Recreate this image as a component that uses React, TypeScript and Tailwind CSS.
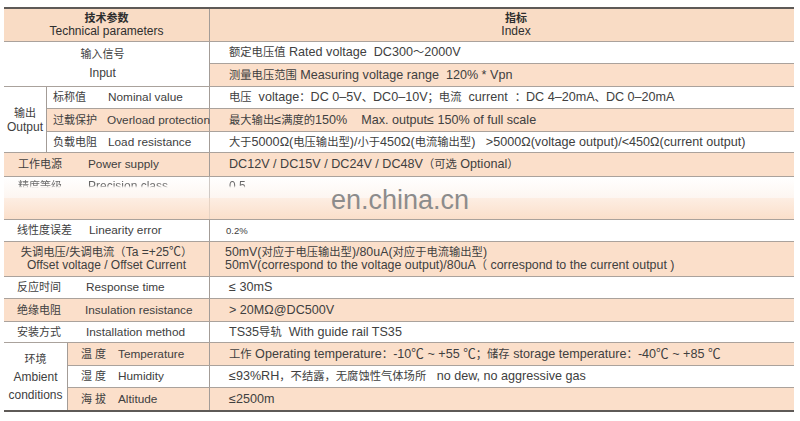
import React from "react";

const PEACH = "bg-[#fbdfca]";

function T({ s }: { s: string }) {
  const parts = s.match(/[\u3000-\u9fff\uff00-\uffef]+|[^\u3000-\u9fff\uff00-\uffef]+/g) || [];
  return (
    <>
      {parts.map((p, i) =>
        /[\u3000-\u9fff\uff00-\uffef]/.test(p) ? (
          <span key={i} className="text-[11.3px]">{p}</span>
        ) : (
          <span key={i}>{p}</span>
        )
      )}
    </>
  );
}

function Cell({ s, className = "" }: { s: string; className?: string }) {
  return (
    <div className={"flex items-center whitespace-pre text-[12.6px] " + className}>
      <span><T s={s} /></span>
    </div>
  );
}

function Label({ zh, en, pl, w }: { zh: string; en: string; pl: string; w: string }) {
  return (
    <div className={"flex items-baseline whitespace-pre " + pl}>
      <span className={"text-[11px] " + w}>{zh}</span>
      <span className="text-[11.8px]">{en}</span>
    </div>
  );
}

export default function App() {
  return (
    <div className="relative w-[800px] h-[421px] bg-white pt-[7px] pl-[4px] text-[12px] leading-[13px] text-[#404040] font-['Liberation_Sans','Noto_Sans_CJK_SC',sans-serif]">
      <div className="w-[790px] border-t-2 border-b-2 border-[#5e5a57]">
        {/* header */}
        <div className="flex h-[33px] bg-[#f9dcc5] border-b border-[#aaa29c]">
          <div className="w-[206px] border-r border-[#a39c97] flex flex-col items-center justify-center text-[#2e2e2e]">
            <span className="font-bold text-[11px]">技术参数</span>
            <span className="text-[12px]">Technical parameters</span>
          </div>
          <div className="flex-1 flex flex-col items-center justify-center pl-[28px] text-[#2e2e2e]">
            <span className="font-bold text-[11px]">指标</span>
            <span className="text-[12px]">Index</span>
          </div>
        </div>

        {/* input */}
        <div className="flex border-b border-[#aaa29c]">
          <div className="w-[206px] border-r border-[#a39c97] flex flex-col items-center justify-center leading-[19px] pr-[8px]">
            <span className="text-[11px]">输入信号</span>
            <span>Input</span>
          </div>
          <div className="flex-1 flex flex-col">
            <Cell className="h-[22px] border-b border-[#aaa29c] pl-[19px]" s="额定电压值 Rated voltage  DC300～2000V" />
            <Cell className={"h-[22px] pl-[19px] " + PEACH} s="测量电压范围 Measuring voltage range  120% * Vpn" />
          </div>
        </div>

        {/* output */}
        <div className="flex border-b border-[#aaa29c]">
          <div className="w-[43px] border-r border-[#a39c97] flex flex-col items-center justify-center leading-[14px]">
            <span className="text-[11px]">输出</span>
            <span>Output</span>
          </div>
          <div className="flex-1 flex flex-col">
            <div className="flex h-[22px] border-b border-[#aaa29c]">
              <div className="w-[163px] border-r border-[#a39c97] flex items-center">
                <Label zh="标称值" en="Nominal value" pl="pl-[6px]" w="w-[55px]" />
              </div>
              <Cell className="flex-1 pl-[19px]" s="电压  voltage：DC 0–5V、DC0–10V；电流  current  ：DC 4–20mA、DC 0–20mA" />
            </div>
            <div className={"flex h-[23px] border-b border-[#aaa29c] " + PEACH}>
              <div className="w-[163px] border-r border-[#a39c97] flex items-center">
                <Label zh="过载保护" en="Overload protection" pl="pl-[6px]" w="w-[54px]" />
              </div>
              <Cell className="flex-1 pl-[19px]" s="最大输出≤满度的150%    Max. output≤ 150% of full scale" />
            </div>
            <div className="flex h-[20px]">
              <div className="w-[163px] border-r border-[#a39c97] flex items-center">
                <Label zh="负载电阻" en="Load resistance" pl="pl-[6px]" w="w-[55px]" />
              </div>
              <Cell className="flex-1 pl-[19px]" s="大于5000Ω(电压输出型)/小于450Ω(电流输出型)   >5000Ω(voltage output)/<450Ω(current output)" />
            </div>
          </div>
        </div>

        {/* power */}
        <div className={"flex h-[24px] border-b border-[#aaa29c] " + PEACH}>
          <div className="w-[206px] border-r border-[#a39c97] flex items-center">
            <Label zh="工作电源" en="Power supply" pl="pl-[14px]" w="w-[70px]" />
          </div>
          <Cell className="flex-1 pl-[19px]" s="DC12V / DC15V / DC24V / DC48V（可选 Optional）" />
        </div>

        {/* obscured rows */}
        <div className="flex h-[21px] bg-linear-to-b from-white to-[#fdf6f1]">
          <div className="w-[206px] border-r border-[#cfc9c5] flex items-start pt-[3px]">
            <div className="flex pl-[14px] blur-[0.7px] bg-linear-to-b from-[#666] from-40% to-transparent to-60% bg-clip-text text-transparent">
              <span className="w-[70px] text-[11px]">精度等级</span>
              <span>Precision class</span>
            </div>
          </div>
          <div className="flex-1 flex items-start pt-[3px] pl-[19px]">
            <div className="blur-[0.7px] bg-linear-to-b from-[#666] from-40% to-transparent to-60% bg-clip-text text-transparent">0.5</div>
          </div>
        </div>
        <div className="flex h-[22px] border-b border-[#aaa29c] bg-linear-to-b from-[#fdeee3] to-[#fbdfca]">
          <div className="w-[206px] border-r border-[#e6d3c4]"></div>
          <div className="flex-1"></div>
        </div>

        {/* linearity */}
        <div className="flex h-[22px] border-b border-[#aaa29c]">
          <div className="w-[206px] border-r border-[#a39c97] flex items-center">
            <Label zh="线性度误差" en="Linearity error" pl="pl-[13px]" w="w-[72px]" />
          </div>
          <div className="flex-1 flex items-center pl-[16px] text-[9.5px]">0.2%</div>
        </div>

        {/* offset */}
        <div className={"flex h-[35px] border-b border-[#aaa29c] " + PEACH}>
          <div className="w-[206px] border-r border-[#a39c97] flex flex-col items-center justify-center leading-[13px] whitespace-pre">
            <span><T s="失调电压/失调电流（Ta =+25℃）" /></span>
            <span>Offset voltage / Offset Current</span>
          </div>
          <div className="flex-1 flex flex-col justify-center pl-[15px] leading-[13px] whitespace-pre text-[12.4px]">
            <span><T s="50mV(对应于电压输出型)/80uA(对应于电流输出型)" /></span>
            <span><T s="50mV(correspond to the voltage output)/80uA（ correspond to the current output )" /></span>
          </div>
        </div>

        {/* response */}
        <div className="flex h-[22px] border-b border-[#aaa29c]">
          <div className="w-[206px] border-r border-[#a39c97] flex items-center">
            <Label zh="反应时间" en="Response time" pl="pl-[13px]" w="w-[69px]" />
          </div>
          <Cell className="flex-1 pl-[19px]" s="≤ 30mS" />
        </div>

        {/* insulation */}
        <div className={"flex h-[23px] border-b border-[#aaa29c] " + PEACH}>
          <div className="w-[206px] border-r border-[#a39c97] flex items-center">
            <Label zh="绝缘电阻" en="Insulation resistance" pl="pl-[13px]" w="w-[68px]" />
          </div>
          <Cell className="flex-1 pl-[19px]" s="> 20MΩ@DC500V" />
        </div>

        {/* install */}
        <div className="flex h-[21px] border-b border-[#aaa29c]">
          <div className="w-[206px] border-r border-[#a39c97] flex items-center">
            <Label zh="安装方式" en="Installation method" pl="pl-[13px]" w="w-[69px]" />
          </div>
          <Cell className="flex-1 pl-[19px]" s="TS35导轨  With guide rail TS35" />
        </div>

        {/* ambient */}
        <div className="flex">
          <div className="w-[64px] border-r border-[#a39c97] flex flex-col items-center justify-center leading-[18px]">
            <span className="text-[11px]">环境</span>
            <span>Ambient</span>
            <span>conditions</span>
          </div>
          <div className="flex-1 flex flex-col">
            <div className={"flex h-[23px] border-b border-[#aaa29c] " + PEACH}>
              <div className="w-[142px] border-r border-[#a39c97] flex items-center">
                <Label zh="温 度" en="Temperature" pl="pl-[13px]" w="w-[37px]" />
              </div>
              <Cell className="flex-1 pl-[19px]" s="工作 Operating temperature：-10℃ ~ +55 ℃；储存 storage temperature：-40℃ ~ +85 ℃" />
            </div>
            <div className="flex h-[22px] border-b border-[#aaa29c]">
              <div className="w-[142px] border-r border-[#a39c97] flex items-center">
                <Label zh="湿 度" en="Humidity" pl="pl-[13px]" w="w-[37px]" />
              </div>
              <Cell className="flex-1 pl-[19px]" s="≤93%RH，不结露，无腐蚀性气体场所   no dew, no aggressive gas" />
            </div>
            <div className={"flex h-[22px] " + PEACH}>
              <div className="w-[142px] border-r border-[#a39c97] flex items-center">
                <Label zh="海 拔" en="Altitude" pl="pl-[13px]" w="w-[37px]" />
              </div>
              <Cell className="flex-1 pl-[19px]" s="≤2500m" />
            </div>
          </div>
        </div>
      </div>

      <div className="absolute left-[331px] top-[187px] text-[27px] leading-[27px] text-[#8c8c8c] font-['Liberation_Sans',sans-serif]">
        en.china.cn
      </div>
    </div>
  );
}
